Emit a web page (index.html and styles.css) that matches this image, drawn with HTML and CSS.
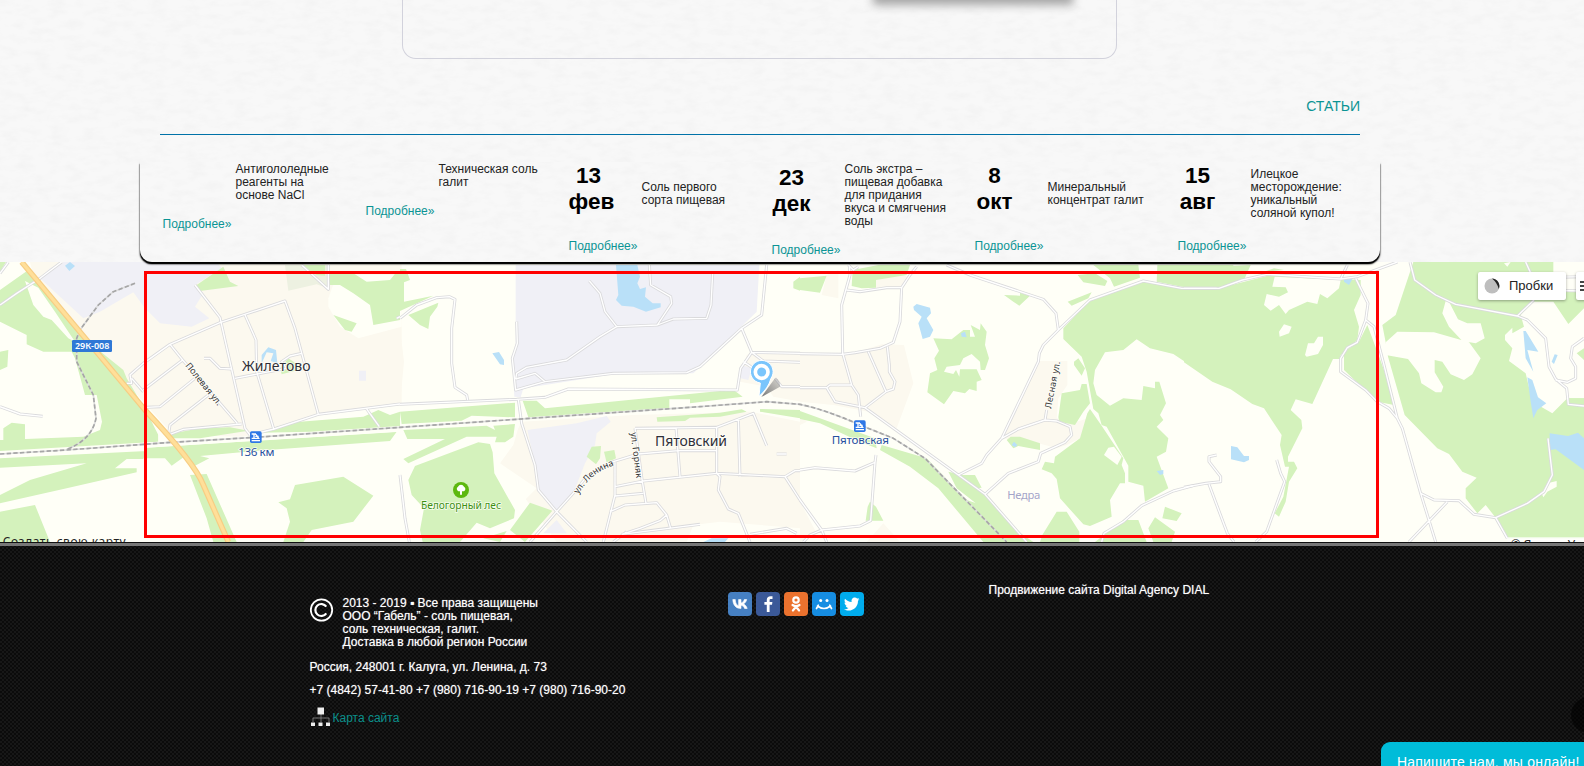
FILE: index.html
```html
<!DOCTYPE html>
<html lang="ru">
<head>
<meta charset="utf-8">
<title>Габель</title>
<link rel="stylesheet" href="styles.css">
</head>
<body>
<main class="content">
  <svg class="paper" width="1584" height="262" aria-hidden="true">
    <filter id="grain" x="0" y="0" width="100%" height="100%">
      <feTurbulence type="fractalNoise" baseFrequency="0.06 0.14" numOctaves="4" seed="4"/>
      <feColorMatrix values="0 0 0 0 0.5  0 0 0 0 0.5  0 0 0 0 0.5  0.16 0 0 0 -0.065"/>
    </filter>
    <rect width="1584" height="262" filter="url(#grain)"/>
  </svg>
  <div class="panel"><div class="panel-shade"></div></div>
  <h2 class="heading">СТАТЬИ</h2>
  <section class="articles">
    <svg class="paper" width="1240" height="100" aria-hidden="true"><rect width="1240" height="100" filter="url(#grain)"/></svg>
    <article class="item"><div class="row"><div class="date"></div><p>Антигололедные<br>реагенты на<br>основе NaCl</p></div><a>Подробнее»</a></article>
    <article class="item"><div class="row"><div class="date"></div><p>Техническая соль<br>галит</p></div><a>Подробнее»</a></article>
    <article class="item"><div class="row"><div class="date full">13<br>фев</div><p>Соль первого<br>сорта пищевая</p></div><a>Подробнее»</a></article>
    <article class="item"><div class="row"><div class="date full">23<br>дек</div><p>Соль экстра –<br>пищевая добавка<br>для придания<br>вкуса и смягчения<br>воды</p></div><a>Подробнее»</a></article>
    <article class="item"><div class="row"><div class="date full">8<br>окт</div><p>Минеральный<br>концентрат галит</p></div><a>Подробнее»</a></article>
    <article class="item"><div class="row"><div class="date full">15<br>авг</div><p>Илецкое<br>месторождение:<br>уникальный<br>соляной купол!</p></div><a>Подробнее»</a></article>
  </section>
</main>

<section class="map">
<svg class="map-canvas" width="1584" height="280" viewBox="0 21 4752 840">
  <defs>
    <g id="roads">
      <path d="M0,55 25,21M0,150 50,115 120,70 185,21M120,70 110,85M585,90 660,187 665,210 735,520 750,540M380,385 395,385 390,360 430,325 510,268 660,203 855,138 885,220 955,478M395,370 430,410M430,405 548,315 510,268M440,457 480,455 585,370M548,315 712,505M505,540 510,510 625,420M505,540 550,523 725,507M735,180 768,255 770,350 822,525M705,370 860,340 845,320 870,303 905,295M612,310 630,310 660,340 695,342M750,540 822,522 955,478 1200,447M1100,462 1138,515M905,30 985,103 985,30M1200,185 1190,190"/>
      <path d="M0,455 60,477 128,484"/>
      <g transform="translate(1200)">
        <path d="M0,190 50,150 110,128 148,125 165,133 155,220 155,325 165,397 200,420 203,435M0,448 350,433 435,427 505,402 1012,405 1022,340 1055,292 1025,220 1085,180 1100,30M350,200 352,265 337,310 347,405 435,380 640,355 860,353 900,335 1025,220M347,372 405,355 435,380M347,372 350,355 380,337 500,315 600,245 650,215 772,210 820,192 920,190 933,150 938,55M650,215 615,170 600,115 568,78M748,30 752,90 812,125 815,145 772,210M1055,292 1200,295M1030,320 1060,340M1055,292 1090,318 1200,322M1125,370 1145,395 1200,395M355,433 365,505 405,630 415,705 470,770 390,861M470,770 560,861M470,770 522,712 560,665 640,620 715,597 835,587 950,587M705,520 950,517 1060,475 1100,572M828,517 840,665M950,517 950,655 960,665 955,705 985,762 1015,775 1050,861M1015,490 1020,665M645,695 730,678 950,655 1155,665 1200,735M1155,665 1185,647 1200,647M645,622 645,720 610,861M645,723 730,715M705,520 727,680 738,745M630,770 675,750 770,743 800,780 812,820M800,780 780,797 720,820 665,838M665,838 900,808M680,830 640,861M1050,838 1160,820 1190,835M0,660 15,790 28,861M1130,597 1160,597"/>
      </g>
      <g transform="translate(2400)">
        <path d="M148,30 150,60 125,150 128,295 155,390 175,420 182,485M145,30 160,45 175,35M140,105 180,110 260,98 305,98 300,200 280,262 240,280 165,293 128,298 0,296M305,98 330,60 350,35M0,398 80,398 105,440 195,458M80,398 90,390 155,390M205,290 258,410M262,275 268,330 268,350 285,380 280,402 258,410 195,458M195,458 475,660 555,718 680,861M475,660 545,625 560,600 605,550M605,550 655,522 735,495 770,498 810,515 815,540 795,562 722,595 715,620 625,655 555,718M605,550 715,320 718,295 730,270 775,225 870,135 1030,78 1145,100 1250,100M440,30 510,60 730,133 768,175 775,225M735,495 740,465M0,645 45,638 165,648 225,622 228,600M225,622 212,797 180,813 65,825 0,735M65,825 30,840 10,861M65,825 80,861M905,861 912,835 970,800 1025,752 1120,708 1180,692"/>
      </g>
      <g transform="translate(3552)">
        <path d="M0,100 105,100 175,75 250,58 470,72 520,65 640,21M470,72 490,30M515,70 552,145 545,195 520,262 490,278 470,310 470,350 545,405 580,440 615,460 640,490M545,195 570,215 600,330 640,490 655,520 710,715 755,861M710,715 750,735 825,737 870,778 935,788 1030,745 1080,710 1105,660 1092,550M790,740 675,861M935,788 970,850M678,21 692,75 755,120 815,148 1000,183 1030,195 1085,250 1095,335 1115,372 1148,400 1153,448 1200,453M1000,183 1050,135M1045,65 1025,21M1050,68 1200,65M1050,105 1200,108M1200,250 1165,275 1160,310 1175,335 1175,370 1150,382 1115,375M0,697 65,685 110,680 110,665 75,620 75,605 98,600M75,688 130,835 150,861M215,861 248,830 302,680 290,655 278,615"/>
      </g>
    </g>
    <path id="highway" d="M65,21 L435,465 Q585,625 610,690 L685,861"/>
    <g id="rail">
      <path d="M0,597 200,585 500,563 750,548 1200,517 2100,455 2300,440 2400,448 Q2480,465 2580,510 L2680,550 2775,610 3020,861"/>
      <path d="M405,85 340,110 295,150 240,225 230,250 230,320 280,420 288,490 Q275,555 200,583"/>
    </g>
  </defs>

  <rect class="ground" y="0" width="4752" height="861"/>

  <g>
    <path class="town" d="M90,21H1205V450L950,480 820,525 730,545 520,540 380,385 100,60Z"/>
    <path class="ground" d="M985,130 1010,60H1205V215L1075,250 1020,215 985,155Z"/>
    <path class="works" d="M150,40 190,21H650L665,40 585,90 610,115 585,155 628,190 575,215 480,205 435,160 400,112 300,170 250,190 120,70ZM1077,347H1098V377H1077Z"/>
    <path class="scrub" d="M855,30H985V100L950,88 865,107Z"/>
    <path class="wood" d="M0,21H18L0,50ZM0,105 85,45 240,240 370,345 380,370 440,470 475,500V560L250,578 0,590V555L250,545 300,525 306,500 290,420 255,420 225,310 215,290 130,290 80,268V240L0,200ZM0,290 25,285 22,335 0,345ZM10,520 35,503 75,508V552L10,560ZM0,610 440,588 430,612 380,612 345,640H410V652L200,700 0,745V720L90,675 260,625 0,638ZM440,578 1190,530 1170,558 740,590 600,603 628,610 585,632 560,600 515,632 495,610H440ZM0,770 105,750 150,861H0ZM570,660 620,657 710,861H640L620,790ZM500,550 520,535 600,520 690,517 745,527 600,550ZM780,533 830,515 900,500 1090,485 1135,465 1170,480 1200,470V513L930,530ZM885,690 1030,665 1120,722 1060,800 935,825 910,861H850L870,800 860,760 835,742 870,733ZM590,90 670,35 690,80 715,93 600,108ZM985,55H1060L1100,80 1170,75 1190,50H1200V195L1120,210 1110,150 1060,115 1020,90H990ZM1000,180 1070,205 1055,230 1035,225ZM905,30H975V62L950,60ZM840,340 865,310 895,330V345L845,358Z"/>
    <path class="ground" d="M75,78 115,98 165,170 225,260 205,250 155,195 130,185 100,150ZM440,470 475,500 530,560H475V540ZM0,588 1200,518V530L0,606Z"/>
    <path class="water" d="M195,32 210,21 225,33 208,48ZM785,325V300L805,277 828,285 832,325 812,318 820,295 800,292Z"/>
  </g>

  <g transform="translate(1200)">
    <path class="town" d="M1040,300 1060,290H1205V440L1120,425 1100,395 1020,380ZM0,220 12,320 0,448ZM365,500 700,480 1050,470 1200,500V820L960,800 880,810 860,861H470L300,625Z"/>
    <path class="ground" d="M250,560 360,500 340,570 300,625 410,700 350,760Z"/>
    <path class="works" d="M347,30H1078L1070,170 880,355 640,358 435,390 370,400 362,427 343,425 337,310 347,265ZM382,525 530,505 620,483 632,500 590,535 585,570 555,625 520,715 470,765 415,705 405,630ZM470,795 500,835H430ZM1025,330 1055,340 1045,375 1022,370Z"/>
    <path class="wood" d="M0,42 18,42 30,75 12,82V140L100,122 0,168ZM25,180 115,143 112,155 90,185 85,222 60,210ZM0,470 345,443V487L215,482 185,497 5,507ZM368,437 410,437 435,460 960,408H1005L1028,425 870,445V433H808V460L755,462 385,487ZM770,487 960,473 1025,463 1040,470 960,485 870,488 855,498 772,500ZM1080,462 1200,465V490L1080,470ZM10,525 260,512 285,525 280,512 345,507 340,545 315,562 285,562 290,545 200,545 25,625 10,612 135,552H22ZM45,633 235,562 270,567 278,592 283,655 345,765 342,790 270,820 230,803 180,861H68L60,825 72,760 35,720 25,675ZM390,743 457,767 375,861 330,825ZM250,850 320,828 300,861ZM560,605 575,575 603,573 600,610 588,628ZM612,590 643,585 648,610 620,623ZM1180,80 1200,65V107L1180,100Z"/>
    <path class="water" d="M648,30H712L720,65 712,85 720,102 738,97 735,125 758,145 782,145V157L738,170 700,155 665,152 648,135 655,120ZM277,295 297,291 312,315V330L300,328ZM910,861 935,850 985,850 975,861Z"/>
  </g>

  <g transform="translate(2400)">
    <path class="town" d="M0,300 165,293 245,268 312,270 340,385 290,520 205,470 100,450 0,440ZM80,60 115,45V130L65,120ZM228,72 300,50 325,70 300,95 228,100ZM605,550 715,318H802V390L775,430 770,490 830,500 865,490 850,545 800,570 770,580 700,560ZM0,740 50,835 0,861ZM250,805 300,861H200ZM0,480 20,500 0,510Z"/>
    <path class="wood" d="M0,70 80,62 60,113 0,105ZM158,45 235,30H330L320,60 228,75V98L185,100 155,93ZM880,30H1015L1020,68 942,95 930,70ZM833,60 885,55 922,78 915,93 850,82ZM1072,30H1300V110L1145,95 1070,80ZM803,140 875,112 865,130 815,152ZM612,120 660,122V113L690,122 658,152 640,140ZM400,250 455,253 490,225 510,225V245L525,245 512,210 540,225 542,205 560,230 555,270 567,310 555,345 542,345 540,320 515,297 490,310 480,330 440,335 432,350 460,357 468,345 478,365 480,343 530,343 545,375 530,380V408L508,402 495,415 460,408 432,448 382,412 390,355 412,345 403,310 417,287ZM790,220 870,135 1030,80 1200,105V350L1120,297 1050,280 1010,253 970,285 915,292 885,345 880,385 890,420 930,452 970,430 1025,435 1030,393 1065,400V380H1078L1098,445 1080,480 1090,495 1070,515 1105,550 1098,590 1070,605 1105,700 1035,740 1030,692 985,680V632L920,515 905,510 895,475 880,462 860,350 845,305 790,252ZM822,320 835,310 855,340 845,362 822,330ZM775,487 785,415 840,405 845,387 860,387 870,445 850,470 825,510 778,500ZM870,462 905,512 970,610 965,630 975,655V685L960,685 930,735 935,785 870,813 850,808 780,730 770,672 755,655 725,643 735,620 762,625 765,605 840,550 862,475ZM245,570 380,610 500,735 560,755 655,861H550L415,700 330,635 240,585ZM0,468 225,550 230,580 180,560 60,505 0,492ZM445,650 490,660 525,660 545,698 530,700 560,725 655,830 700,861H640L560,770 470,700ZM210,740 228,755 250,797 197,797 203,755ZM620,555 632,545 660,545 720,565V585L655,573 640,580ZM727,840 770,770 800,770 838,830 838,861H720ZM885,861 970,795 1015,795 1040,861ZM1045,820 1065,787 1125,830 1115,861H1060ZM1095,755 1145,775 1130,798 1087,790Z"/>
    <path class="ground" d="M912,600 925,578 942,575 965,605 952,630Z"/>
    <path class="water" d="M340,155 350,147 390,158 393,175 380,190 400,225 390,245 368,252 355,205 365,185 342,165ZM483,235 495,230 500,247 485,245ZM635,570 642,560 652,570 645,577ZM1070,648 1090,645 1090,657 1080,660Z"/>
  </g>

  <g transform="translate(3552)">
    <path class="wood" d="M0,40 200,30 180,75 100,95 0,100ZM0,100H105L260,60 530,75V120L510,165 525,215 520,255 470,300V312H447L385,447 335,433 320,465 352,495 355,520 312,605V620L330,620 340,640 315,680 305,740 285,785 272,775 298,725 315,635 303,635 288,570 293,540 240,460 205,447 140,403 85,380 0,322ZM480,290 525,260 550,210 580,290 600,345 630,450 580,440 480,345ZM688,21H1108V70L1150,110H1200V160L1153,207 1108,140H1045L1010,180 1020,215 985,235 985,218 963,240V255L985,280 975,318 1025,355 1045,440 1105,475 1150,430 1200,430V850H970L935,788 905,750 880,775 845,730V700L878,668 835,650 795,597 760,580 662,480 612,305 605,262 595,210 635,180ZM1178,295 1200,280V315Z"/>
    <path class="ground" d="M605,262 640,230 750,232 855,262 890,310 865,358 840,375 800,358 775,320 752,315V352L778,395 772,412H755L712,385 705,355 672,312 605,300ZM775,175 785,138 795,140 822,193 850,205 890,205 902,250 875,265 835,258 795,215ZM240,150 248,117 285,125 312,112 305,97 265,95 272,65 470,75 465,100 430,130 408,117 400,147 370,140 315,165 305,177 285,150 260,167ZM285,230 300,208 323,215 315,235 287,245ZM363,300 372,265 390,265 402,245 417,245V270L402,297 368,305ZM1073,715 1090,685 1118,678V695L1090,710 1078,727ZM960,25 980,21 970,35ZM1120,70H1200V110H1120Z"/>
    <path class="wood" d="M270,40 240,50 300,45ZM1153,430H1200V450L1155,445Z"/>
    <path class="water" d="M480,68 505,72 495,90 480,80ZM1018,228H1025L1063,290 1030,285 1048,350 1025,310ZM1103,320 1112,298 1121,300 1110,327ZM1030,367 1045,375 1062,427 1087,445 1060,465 1048,490 1040,440ZM1097,535 1152,543 1182,533 1200,550V645L1115,583 1097,585ZM141,573 160,577 180,603 195,603V615L180,622 141,613Z"/>
  </g>

  <use href="#roads" class="road-edge"/>
  <use href="#roads" class="road-fill"/>
  <use href="#rail" class="rail-bed"/>
  <use href="#rail" class="rail-dash"/>
  <use href="#highway" class="highway-edge"/>
  <use href="#highway" class="highway-fill"/>

  <rect x="216" y="255" width="120" height="36" rx="4" fill="#2f78d6"/>
  <text class="shield" x="225" y="282" textLength="103">29К-008</text>
  <g class="station"><rect x="750" y="529" width="35" height="35" rx="5"/><path d="M755,537H768M762,537V550M755,550H776L768,538M766,544H776M755,557H780"/></g>
  <g class="station" transform="translate(1812,-33)"><rect x="750" y="529" width="35" height="35" rx="5"/><path d="M755,537H768M762,537V550M755,550H776L768,538M766,544H776M755,557H780"/></g>

  <circle cx="1383" cy="705" r="24" fill="#5db80f"/>
  <path d="M1375,709a8,8 0 0 1 -1,-14a10,10 0 0 1 18,0a8,8 0 0 1 0,14H1386V719H1380V709Z" fill="#fff"/>

  <g class="label">
    <text x="726" y="348" class="city" textLength="206">Жилетово</text>
    <text x="1965" y="573" class="city" textLength="216">Пятовский</text>
    <text x="715" y="604" class="stop" textLength="108">136 км</text>
    <text x="2495" y="568" class="stop" textLength="172">Пятовская</text>
    <text x="1263" y="762" class="forest" textLength="240">Белогорный лес</text>
    <text x="3022" y="732" class="district" textLength="99">Недра</text>
    <text transform="translate(555,332) rotate(51)" class="street" textLength="156">Полевая ул.</text>
    <text transform="translate(1892,533) rotate(83)" class="street" textLength="138">ул. Горняк</text>
    <path id="lenin" d="M1735,718 Q1775,650 1845,630" fill="none"/>
    <text class="street"><textPath href="#lenin">ул. Ленина</textPath></text>
    <text transform="translate(3153,462) rotate(-79)" class="street" textLength="144">Лесная ул.</text>
  </g>

  <linearGradient id="cast" x1="0" y1="1" x2="1" y2="0"><stop offset="0" stop-color="#777"/><stop offset="1" stop-color="#777" stop-opacity=".25"/></linearGradient>
  <path d="M2284,426 2326,368Q2342,378 2340,395Z" fill="url(#cast)"/>
  <path d="M2277,424 2281,384A34,34 0 1 1 2313,370Q2305,400 2277,424Z" fill="#7ac5fc" stroke="#fff" stroke-width="3"/>
  <circle cx="2285" cy="351" r="19" fill="#7ac5fc" stroke="#fff" stroke-width="11"/>

  <text class="mapnote" x="8" y="873" textLength="369">Создать свою карту</text>
  <rect x="4522" y="846" width="230" height="15" fill="#fff" fill-opacity=".6"/>
  <text class="mapnote" x="4532" y="882">© Яндекс Условия</text>
</svg>
  <div class="frame"></div>
  <div class="controls">
    <div class="traffic"><svg width="16" height="16" viewBox="0 0 16 16"><circle cx="8" cy="8" r="7.5" fill="#bebebe"/><path d="M8,.5A7.500,7.500 0 0 1 14.800,11Q13,4.500 8,.5Z" fill="#222"/></svg><span>Пробки</span></div>
    <div class="layers"><svg width="10" height="12" viewBox="0 0 10 12"><path d="M0,2H10M0,6H10M0,10H10" stroke="#444" stroke-width="2.200"/></svg></div>
  </div>
</section>

<footer class="footer">
  <div class="about">
    <div class="copy">
      <svg width="24" height="24" viewBox="0 0 24 24" fill="none" stroke="#fff"><circle cx="11.500" cy="12" r="10.700" stroke-width="1.800"/><path d="M16.300,8.600A6,6 0 1 0 16.300,15.400" stroke-width="2.200"/></svg>
      <p>2013 - 2019 ▪ Все права защищены<br>ООО “Габель” - соль пищевая,<br>соль техническая, галит.<br>Доставка в любой регион России</p>
    </div>
    <p class="address">Россия, 248001 г. Калуга, ул. Ленина, д. 73</p>
    <p class="phones">+7 (4842) 57-41-80 +7 (980) 716-90-19 +7 (980) 716-90-20</p>
    <div class="sitemap"><svg width="20" height="20" viewBox="0 0 20 20"><path d="M10,7V15M2,15V11H18V15" fill="none" stroke="#777"/><path d="M6.500,0.500H13V7.500H6.500ZM0,15.500H4V19H0ZM7.500,15.500H11.500V19H7.500ZM15,15.500H19V19H15Z" fill="#eee"/></svg><a>Карта сайта</a></div>
  </div>
  <div class="social">
    <svg width="24" height="24" viewBox="0 0 24 24"><rect width="24" height="24" rx="4" fill="#4680c2"/><path d="M12.900,16.500C7.900,16.500 5,13.100 4.800,7.500H7.300C7.400,11.600 9.200,13.400 10.600,13.700V7.500H13V11C14.400,10.900 15.800,9.300 16.300,7.500H18.700C18.300,9.700 16.700,11.300 15.600,12C16.700,12.500 18.500,13.900 19.200,16.500H16.600C16,14.800 14.700,13.500 13,13.300V16.500Z" fill="#fff" stroke="#fff" stroke-width=".6"/></svg>
    <svg width="24" height="24" viewBox="0 0 24 24"><rect width="24" height="24" rx="4" fill="#3b5998"/><path d="M13.600,20V12.800H16L16.400,10H13.600V8.200C13.600,7.400 13.900,6.900 15.100,6.900H16.500V4.300C16.200,4.200 15.400,4.200 14.500,4.200C12.300,4.200 10.800,5.500 10.800,7.800V10H8.400V12.800H10.800V20Z" fill="#fff"/></svg>
    <svg width="24" height="24" viewBox="0 0 24 24"><rect width="24" height="24" rx="4" fill="#eb722e"/><g fill="none" stroke="#fff" stroke-width="2.200" stroke-linecap="round"><circle cx="12" cy="8" r="2.700"/><path d="M8.500,13Q12,15.200 15.500,13M12,14.700 8.900,18.500M12,14.700 15.100,18.500"/></g></svg>
    <svg width="24" height="24" viewBox="0 0 24 24"><rect width="24" height="24" rx="4" fill="#168de2"/><circle cx="8.700" cy="8.500" r="1.500" fill="#fff"/><circle cx="15" cy="8.500" r="1.500" fill="#fff"/><path d="M5.500,14Q12,19 18.500,14M4.500,16.500 6.300,13.200M19.500,16.500 17.700,13.200" fill="none" stroke="#fff" stroke-width="1.700" stroke-linecap="round"/></svg>
    <svg width="24" height="24" viewBox="0 0 24 24"><rect width="24" height="24" rx="4" fill="#00aced"/><path d="M19.500,7.300L18,8.800C18.100,14.800 13.500,18.600 8.800,18.600C7,18.600 5.300,18.100 4,17.200C5.800,17.400 7.300,16.900 8.500,16C7.100,16 6,15 5.600,13.800C6.100,13.900 6.500,13.900 7,13.700C5.400,13.400 4.500,12 4.500,10.600C5,10.800 5.400,11 5.900,11C4.500,10 4.100,8.200 5,6.700C6.700,8.700 9,9.900 11.700,10C11,7.500 12.700,5.600 14.800,5.600C15.700,5.600 16.500,6 17.100,6.600C17.800,6.500 18.500,6.200 19.100,5.900C18.900,6.600 18.400,7.200 17.800,7.600C18.400,7.600 19,7.500 19.500,7.300Z" fill="#fff"/></svg>
  </div>
  <p class="promo">Продвижение сайта Digital Agency DIAL</p>
  <div class="to-top"></div>
  <div class="chat">Напишите нам, мы онлайн!</div>
</footer>
</body>
</html>
```
FILE: styles.css
```css
* { box-sizing: border-box; }
body { margin: 0; width: 1584px; height: 766px; overflow: hidden; background: #f7f7f7; font: 12px/13px "Liberation Sans", Arial, sans-serif; color: #222; }
p, h2 { margin: 0; }

.content { position: relative; height: 262px; display: flow-root; background: #f8f8f8; }
.paper { position: absolute; left: 0; top: 0; }
.panel { position: relative; width: 715px; height: 59px; margin-left: 402px; border: solid #d2d2dc; border-width: 0 1px 1px; border-radius: 0 0 14px 14px; overflow: hidden; }
.panel-shade { width: 196px; height: 20px; margin: -22px 0 0 472px; box-shadow: 0 5px 10px 2px #a5a5a5; }
.heading { position: relative; width: 1200px; height: 36px; margin: 40px 0 0 160px; border-bottom: 1px solid #0072a8; font-size: 14px; line-height: 14px; font-weight: 400; text-align: right; color: #0b9494; }
.articles { position: relative; z-index: 1; display: flex; width: 1240px; height: 100px; margin: 27px 0 0 140px; padding: 1px 0 0 22.5px; border-radius: 0 0 12px 12px; box-shadow: 0 2px 2px #000, 0 2px 1px #000; background: #f8f8f8; }
.item { position: relative; width: 203px; flex: none; white-space: nowrap; }
.row { display: flex; align-items: center; gap: 33px; }
.date { width: 40px; flex: none; }
.full { height: 61px; font: bold 22.500px/25.500px "Liberation Sans", Arial, sans-serif; color: #000; text-align: center; }
.item a { display: block; margin-top: 16px; color: #0b9494; }

.map { position: relative; height: 280px; overflow: hidden; }
.map-canvas { display: block; }
.ground { fill: #fffff7; }
.town { fill: #fcf9ef; }
.works { fill: #f0f0f6; }
.scrub { fill: #edf1e1; }
.wood { fill: #d4f2bc; }
.water { fill: #b9e0f8; }
.road-edge, .road-fill, .rail-bed, .rail-dash, .highway-edge, .highway-fill { fill: none; stroke-linejoin: round; }
.road-edge { stroke: #dadadc; stroke-width: 9; }
.road-fill { stroke: #fff; stroke-width: 4; }
.rail-bed { stroke: #ddd; stroke-width: 5; }
.rail-dash { stroke: #a6a6a6; stroke-width: 5; stroke-dasharray: 13 7; }
.highway-edge { stroke: #f7cd83; stroke-width: 17; }
.highway-fill { stroke: #ffdf99; stroke-width: 10; }
.station rect { fill: #2f78e6; }
.station path { fill: none; stroke: #fff; stroke-width: 4; }
.map text { font-family: "Noto Sans", sans-serif; }
.shield { font-size: 27px; font-weight: 600; fill: #fff; }
.label text { paint-order: stroke; stroke: #fffffa; stroke-width: 5; stroke-opacity: .8; }
.label .city { font-size: 42px; fill: #2f2f38; }
.label .stop { font-size: 35px; fill: #2850a0; }
.label .forest { font-size: 31px; fill: #3e9014; }
.label .district { font-size: 34px; fill: #a5a5c8; }
.label .street { font-size: 27px; fill: #333; }
.mapnote { font-size: 36px; fill: #222; }
.frame { position: absolute; left: 144px; top: 9px; width: 1235px; height: 267px; border: 3px solid #f00; }
.controls { position: absolute; left: 1478px; top: 10px; display: flex; gap: 10px; }
.traffic, .layers { display: flex; align-items: center; height: 28px; background: #fff; border-radius: 2px; box-shadow: 0 1px 3px rgba(0,0,0,.35); }
.traffic { width: 88px; padding-left: 6px; gap: 9px; font: 13px/28px "Liberation Sans", sans-serif; }
.layers { width: 40px; padding-left: 4px; }

.footer { position: relative; height: 224px; display: flex; border-top: 1px solid #111; background: repeating-conic-gradient(#171717 0 25%, #0b0b0b 0 50%) 0 0 / 4px 4px; box-shadow: inset 0 3px #777; color: #fff; text-shadow: 0 0 1px rgba(255,255,255,.6); white-space: nowrap; }
.about { width: 417.500px; margin-left: 309.500px; padding-top: 54px; flex: none; }
.copy { display: flex; gap: 9px; }
.copy svg { margin-top: 1px; }
.address { margin-top: 12px; }
.phones { margin-top: 10px; }
.sitemap { display: flex; align-items: flex-end; gap: 2px; margin-top: 10px; padding-left: 1px; color: #0b8f8b; text-shadow: none; }
.sitemap a { margin-bottom: 2px; }
.social { display: flex; gap: 4px; width: 261px; padding-top: 49px; margin-left: .500px; flex: none; }
.promo { padding-top: 41px; }
.to-top { position: absolute; left: 1571px; top: 154px; width: 36px; height: 36px; border-radius: 50%; background: rgba(0,0,0,.55); }
.chat { position: absolute; left: 1381px; top: 199px; width: 220px; height: 40px; padding: 11px 16px; border-radius: 9px 0 0 0; background: #00bcd9; font-size: 14px; line-height: 18px; letter-spacing: .2px; text-shadow: none; }
```
